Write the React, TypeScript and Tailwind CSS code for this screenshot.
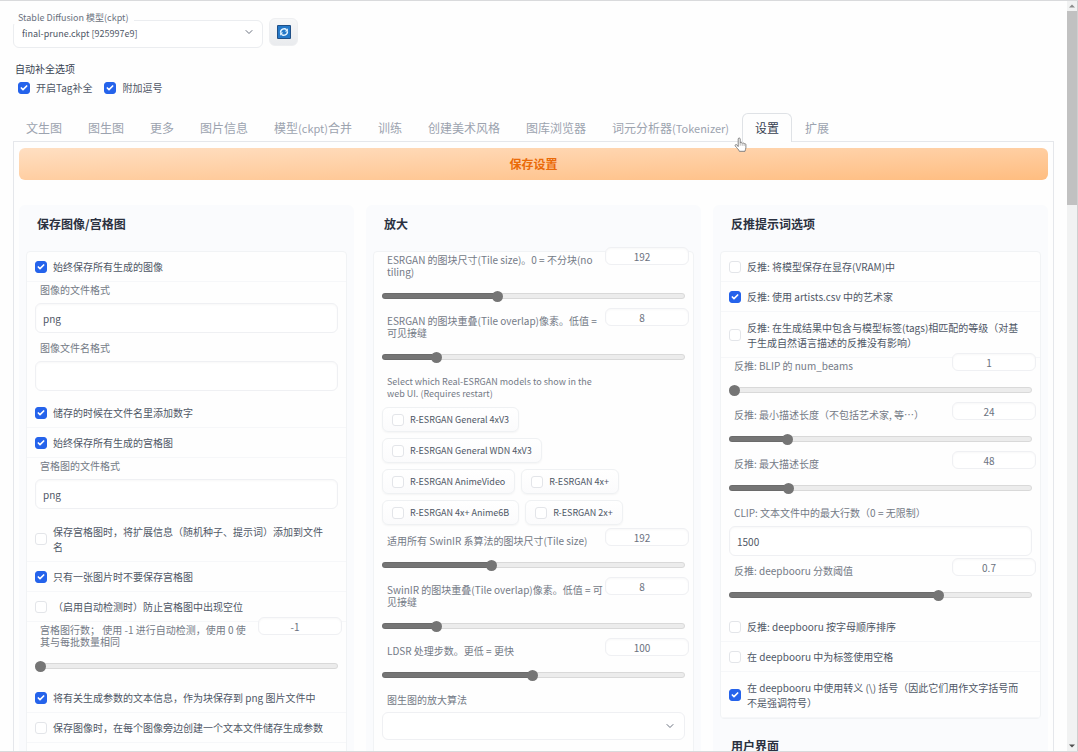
import { useId, useState } from "react";
import type { ReactNode } from "react";
import { Check, ChevronDown } from "lucide-react";
import clsx from "clsx";

interface SliderProps {
  label: string;
  value: number;
  min: number;
  max: number;
  step?: number;
}

const tabs: string[] = [
  "文生图",
  "图生图",
  "更多",
  "图片信息",
  "模型(ckpt)合并",
  "训练",
  "创建美术风格",
  "图库浏览器",
  "词元分析器(Tokenizer)",
  "设置",
  "扩展",
];

const upscalerRows: string[][] = [
  ["R-ESRGAN General 4xV3"],
  ["R-ESRGAN General WDN 4xV3"],
  ["R-ESRGAN AnimeVideo", "R-ESRGAN 4x+"],
  ["R-ESRGAN 4x+ Anime6B", "R-ESRGAN 2x+"],
];

function Tick({ id, checked = false }: { id: string; checked?: boolean }) {
  return (
    <span className="grid size-3 shrink-0 place-items-center">
      <input
        id={id}
        type="checkbox"
        defaultChecked={checked}
        className="peer col-start-1 row-start-1 size-3 appearance-none rounded-[3px] border border-[#e3e5e9] bg-white checked:border-[#2563eb] checked:bg-[#2563eb]"
      />
      <Check
        className="pointer-events-none invisible col-start-1 row-start-1 size-2 text-white peer-checked:visible"
        strokeWidth={5}
      />
    </span>
  );
}

function CheckRow({ label, checked }: { label: string; checked?: boolean }) {
  const id = useId();
  const twoLines = label.includes("\n");
  return (
    <div
      className={clsx(
        "flex items-center gap-1.5 border-b border-[#f6f7f9] px-2",
        twoLines ? "h-[46px]" : "h-[30px]"
      )}
    >
      <Tick id={id} checked={checked} />
      <label htmlFor={id} className="whitespace-pre text-[10px] leading-[15px] text-[#4f5766]">
        {label}
      </label>
    </div>
  );
}

function TextField({ label, value = "" }: { label: string; value?: string }) {
  const id = useId();
  return (
    <div className="flex flex-col px-2 pb-[7px] pt-0.5">
      <label htmlFor={id} className="px-[5px] text-[10px] leading-3 text-[#747a86]">
        {label}
      </label>
      <input
        id={id}
        type="text"
        defaultValue={value}
        className="mt-[7px] h-[30px] w-full rounded-md border border-[#eff0f3] bg-white px-[7px] text-[10px] text-[#4f5766] shadow-[inset_0_1px_2px_rgba(0,0,0,0.03)]"
      />
    </div>
  );
}

function SliderField({ label, value, min, max, step = 1 }: SliderProps) {
  const id = useId();
  const [current, setCurrent] = useState(value);
  const fill = ((current - min) / (max - min)) * 100;
  return (
    <div className="px-2 pb-2 pt-0.5">
      <div className="flex items-start justify-between">
        <label htmlFor={id} className="whitespace-pre pl-[5px] text-[10px] leading-3 text-[#747a86]">
          {label}
        </label>
        {/* the number box sits higher than the row and hangs over the right edge */}
        <input
          type="text"
          inputMode="decimal"
          aria-label={label}
          value={current}
          onChange={(e) => setCurrent(Number(e.target.value) || 0)}
          className="-mb-3 -mr-1 -mt-[7px] h-[18px] w-[84px] shrink-0 rounded-md border border-[#eff0f3] bg-white pr-2.5 text-center text-[10px] text-[#6b7280] shadow-[inset_0_1px_2px_rgba(0,0,0,0.03)]"
        />
      </div>
      <div className="mt-[9px] flex h-[18px] items-center">
        <input
          id={id}
          type="range"
          min={min}
          max={max}
          step={step}
          value={current}
          onChange={(e) => setCurrent(Number(e.target.value))}
          style={{ backgroundImage: `linear-gradient(to right, #757575 ${fill}%, transparent ${fill}%)` }}
          className="h-1.5 w-full appearance-none rounded-full bg-[#ececec] shadow-[inset_0_0_0_1px_rgba(0,0,0,0.08)] [&::-webkit-slider-thumb]:size-[11px] [&::-webkit-slider-thumb]:appearance-none [&::-webkit-slider-thumb]:rounded-full [&::-webkit-slider-thumb]:bg-[#757575]"
        />
      </div>
    </div>
  );
}

function Chip({ label }: { label: string }) {
  const id = useId();
  return (
    <div className="flex h-[25px] items-center gap-1.5 rounded-md border border-[#eff1f3] bg-linear-to-b from-white to-[#fbfbfc] px-[9px] shadow-[0_1px_2px_rgba(0,0,0,0.04)]">
      <Tick id={id} />
      <label htmlFor={id} className="whitespace-nowrap text-[9px] leading-3 text-[#4f5766]">
        {label}
      </label>
    </div>
  );
}

// Latin runs are set one size down so they sit evenly beside the Chinese
function TabLabel({ text }: { text: string }) {
  return text.split(/(\([A-Za-z]+\))/).map((part, index) =>
    part.startsWith("(") ? (
      <span key={index} className="text-[11px]">
        {part}
      </span>
    ) : (
      part
    )
  );
}

function Group({ grow, children }: { grow?: boolean; children?: ReactNode }) {
  return (
    <div className={clsx("mx-[7px] rounded-sm border border-[#f1f3f5] bg-[#fefefe]", grow && "flex-1")}>
      {children}
    </div>
  );
}

function Heading({ children }: { children: ReactNode }) {
  return (
    <h2 className="mb-2 flex h-[38px] shrink-0 items-center px-[18px] text-xs font-bold text-[#2b3140]">
      {children}
    </h2>
  );
}

function Column({ children }: { children: ReactNode }) {
  return <section className="flex min-w-0 flex-col rounded-md bg-[#fafbfd]">{children}</section>;
}

function RefreshIcon() {
  return (
    <svg viewBox="0 0 14 14" className="size-3.5" aria-hidden="true">
      <rect width="14" height="14" rx="1" fill="#1f4f86" />
      <rect x="1" y="1" width="12" height="12" fill="#2478c8" />
      <path d="M3.600 7.600A3.500 3.500 0 0 1 9.600 4.800" fill="none" stroke="#e8f6ff" strokeWidth="1.400" />
      <path d="M10.400 6.400A3.500 3.500 0 0 1 4.400 9.200" fill="none" stroke="#e8f6ff" strokeWidth="1.400" />
      <path d="M10.900 3.200v3.200H7.800z" fill="#e8f6ff" />
      <path d="M3.100 10.800V7.600h3.100z" fill="#e8f6ff" />
    </svg>
  );
}

function HandPointer() {
  return (
    <svg viewBox="0 0 13 16" className="pointer-events-none absolute -left-2 top-6 z-10 h-4 w-[13px]" aria-hidden="true">
      <path
        d="M4.2 9.6V2.1c0-1.5 2-1.5 2 0v4c.2-1 1.9-.9 2 .3.3-.8 1.8-.7 1.9.5.4-.6 1.8-.4 1.8.8v3.1c0 1.200-.8 1.900-.9 3.500H5.300C5.100 12.800 2.600 10.900 1.300 9c-.7-1.100.7-2 1.600-1.100z"
        fill="#fff"
        stroke="#777"
        strokeWidth=".9"
        strokeLinejoin="round"
      />
      <path d="M6.200 6.100v2.600M8.200 6.500v2.300M10.100 7v2" stroke="#999" strokeWidth=".7" />
    </svg>
  );
}

function ScrollRail() {
  return (
    <div className="flex w-[11px] shrink-0 flex-col items-center border-r border-[#cfcfcf] bg-[#f1f2f2]" aria-hidden="true">
      <svg viewBox="0 0 10 10" className="size-2.5 shrink-0">
        <path d="M2 6.500L5 3.500l3 3z" fill="#8b8b8b" />
      </svg>
      <div className="h-[194px] w-full bg-[#c1c1c1]" />
      <svg viewBox="0 0 10 10" className="mt-auto size-2.5 shrink-0">
        <path d="M2 3.500L5 6.500l3-3z" fill="#505050" />
      </svg>
    </div>
  );
}

export default function App() {
  const [active, setActive] = useState("设置");

  return (
    <div className="flex h-screen overflow-hidden border-y border-[#d9dadc] bg-[#fefefe] font-['Noto_Sans_CJK_SC',sans-serif]">
      <main className="min-w-0 flex-1 px-[13px] pt-[17px]">
        {/* Model picker */}
        <div className="flex gap-1.5">
          <div className="relative h-7 w-[250px]">
            <select
              id="checkpoint"
              className="h-7 w-full appearance-none rounded-md border border-[#ebedf0] bg-white px-2 text-[9px] text-[#4f5766]"
            >
              <option>final-prune.ckpt [925997e9]</option>
            </select>
            <label
              htmlFor="checkpoint"
              className="absolute left-0 -top-1.5 rounded-t-sm bg-[#fefefe] px-[5px] text-[9px] leading-3 text-[#6b7280]"
            >
              Stable Diffusion 模型(ckpt)
            </label>
            <ChevronDown className="pointer-events-none absolute right-2 top-2 size-3 text-[#6b7280]" />
          </div>
          <button
            type="button"
            aria-label="刷新"
            className="flex h-7 w-[29px] items-center justify-center rounded-md border border-[#eeeff1] bg-linear-to-b from-[#f6f7f8] to-[#e9ebee]"
          >
            <RefreshIcon />
          </button>
        </div>

        {/* Autocomplete options */}
        <fieldset className="mt-4">
          <legend className="px-0.5 text-[10px] leading-[14px] text-[#374151]">自动补全选项</legend>
          <div className="mt-1.5 flex gap-3 px-[5px]">
            <div className="flex items-center gap-1.5">
              <Tick id="tag-complete" checked />
              <label htmlFor="tag-complete" className="text-[10px] leading-3 text-[#4f5766]">
                开启Tag补全
              </label>
            </div>
            <div className="flex items-center gap-1.5">
              <Tick id="append-comma" checked />
              <label htmlFor="append-comma" className="text-[10px] leading-3 text-[#4f5766]">
                附加逗号
              </label>
            </div>
          </div>
        </fieldset>

        {/* Tabs */}
        <div role="tablist" className="mt-[19px] flex h-7">
          {tabs.map((tab) => (
            <div key={tab} className="relative">
              <button
                type="button"
                role="tab"
                aria-selected={tab === active}
                onClick={() => setActive(tab)}
                className={clsx(
                  "h-[29px] whitespace-nowrap rounded-t-md border border-b-0 px-3 text-xs",
                  tab === active
                    ? "border-[#dfe2e6] bg-[#fefefe] text-[#374151]"
                    : "border-transparent text-[#9ca3af]"
                )}
              >
                <TabLabel text={tab} />
              </button>
              {tab === "设置" && <HandPointer />}
            </div>
          ))}
        </div>

        {/* Settings panel */}
        <div role="tabpanel" className="border border-[#e5e7eb] px-[5px] pt-1.5">
          <button
            type="button"
            className="h-8 w-full rounded-md bg-linear-to-br from-[#ffdfc2] to-[#ffbd80] text-xs font-bold text-[#ea6a08]"
          >
            保存设置
          </button>

          <div className="mt-[25px] grid grid-cols-3 gap-3">
            <Column>
              <Heading>保存图像/宫格图</Heading>
              <Group grow>
                <CheckRow label="始终保存所有生成的图像" checked />
                <TextField label="图像的文件格式" value="png" />
                <TextField label="图像文件名格式" />
                <CheckRow label="储存的时候在文件名里添加数字" checked />
                <CheckRow label="始终保存所有生成的宫格图" checked />
                <TextField label="宫格图的文件格式" value="png" />
                <CheckRow label={"保存宫格图时，将扩展信息（随机种子、提示词）添加到文件\n名"} />
                <CheckRow label="只有一张图片时不要保存宫格图" checked />
                <CheckRow label="（启用自动检测时）防止宫格图中出现空位" />
                <SliderField
                  label={"宫格图行数； 使用 -1 进行自动检测，使用 0 使\n其与每批数量相同"}
                  value={-1}
                  min={-1}
                  max={16}
                />
                <CheckRow label="将有关生成参数的文本信息，作为块保存到 png 图片文件中" checked />
                <CheckRow label="保存图像时，在每个图像旁边创建一个文本文件储存生成参数" />
              </Group>
            </Column>

            <Column>
              <Heading>放大</Heading>
              <Group grow>
                <SliderField
                  label={"ESRGAN 的图块尺寸(Tile size)。0 = 不分块(no\ntiling)"}
                  value={192}
                  min={0}
                  max={512}
                />
                <SliderField
                  label={"ESRGAN 的图块重叠(Tile overlap)像素。低值 =\n可见接缝"}
                  value={8}
                  min={0}
                  max={48}
                />
                <fieldset className="px-2 pb-2">
                  <legend className="whitespace-pre pl-[5px] pt-0.5 text-[9px] leading-3 text-[#747a86]">
                    {"Select which Real-ESRGAN models to show in the\nweb UI. (Requires restart)"}
                  </legend>
                  <div className="mt-[7px] flex flex-col gap-1.5">
                    {upscalerRows.map((row) => (
                      <div key={row[0]} className="flex gap-1.5">
                        {row.map((name) => (
                          <Chip key={name} label={name} />
                        ))}
                      </div>
                    ))}
                  </div>
                </fieldset>
                <SliderField label="适用所有 SwinIR 系算法的图块尺寸(Tile size)" value={192} min={16} max={512} />
                <SliderField
                  label={"SwinIR 的图块重叠(Tile overlap)像素。低值 = 可\n见接缝"}
                  value={8}
                  min={0}
                  max={48}
                />
                <SliderField label="LDSR 处理步数。更低 = 更快" value={100} min={1} max={200} />
                <div className="relative px-2 pt-0.5">
                  <label htmlFor="img2img-upscaler" className="block px-[5px] text-[10px] leading-3 text-[#747a86]">
                    图生图的放大算法
                  </label>
                  <select
                    id="img2img-upscaler"
                    className="mt-1.5 block h-7 w-full appearance-none rounded-md border border-[#eff0f3] bg-white px-2 text-[10px] text-[#4f5766]"
                  />
                  <ChevronDown className="pointer-events-none absolute bottom-2 right-[17px] size-3 text-[#6b7280]" />
                </div>
              </Group>
            </Column>

            <Column>
              <Heading>反推提示词选项</Heading>
              <Group>
                <CheckRow label="反推: 将模型保存在显存(VRAM)中" />
                <CheckRow label="反推: 使用 artists.csv 中的艺术家" checked />
                <CheckRow label={"反推: 在生成结果中包含与模型标签(tags)相匹配的等级（对基\n于生成自然语言描述的反推没有影响）"} />
                <SliderField label="反推: BLIP 的 num_beams" value={1} min={1} max={16} />
                <SliderField label="反推: 最小描述长度（不包括艺术家, 等…）" value={24} min={1} max={128} />
                <SliderField label="反推: 最大描述长度" value={48} min={1} max={256} />
                <TextField label="CLIP: 文本文件中的最大行数（0 = 无限制）" value="1500" />
                <SliderField label="反推: deepbooru 分数阈值" value={0.7} min={0} max={1} step={0.01} />
                <CheckRow label="反推: deepbooru 按字母顺序排序" />
                <CheckRow label="在 deepbooru 中为标签使用空格" />
                <CheckRow
                  label={"在 deepbooru 中使用转义 (\\) 括号（因此它们用作文字括号而\n不是强调符号）"}
                  checked
                />
              </Group>
              <div className="mt-2">
                <Heading>用户界面</Heading>
              </div>
            </Column>
          </div>
        </div>
      </main>
      <ScrollRail />
    </div>
  );
}
